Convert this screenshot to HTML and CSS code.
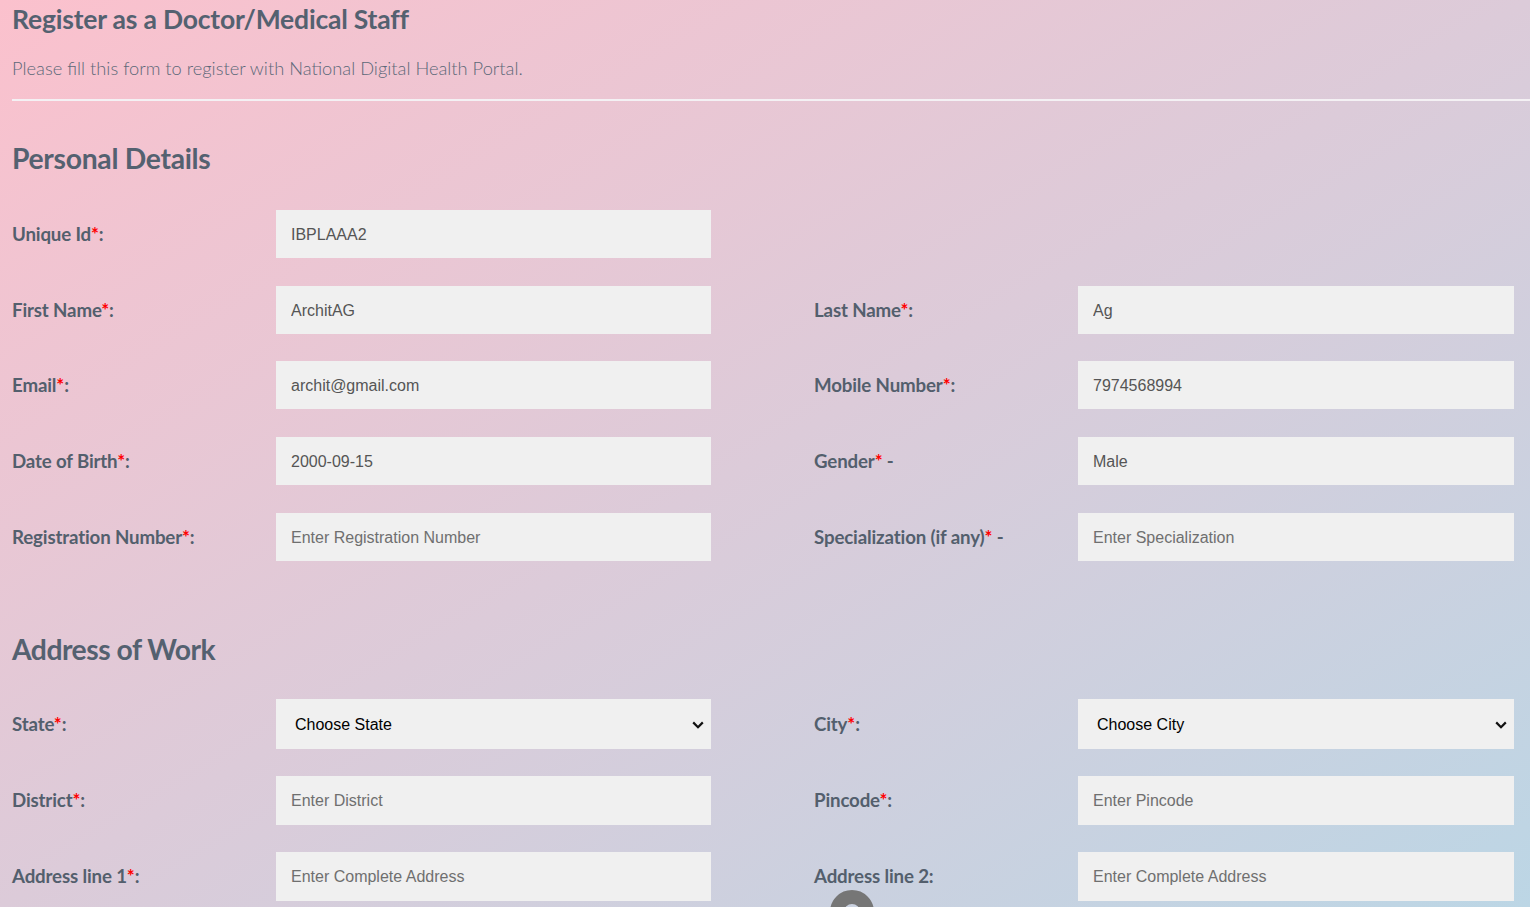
FILE: index.html
```html
<!DOCTYPE html>
<html>
<head>
<meta charset="utf-8">
<link rel="stylesheet" href="styles.css">
</head>
<body>
<div class="page">
  <header class="head">
    <h1 class="title">Register as a Doctor/Medical Staff</h1>
    <p class="subtitle">Please fill this form to register with National Digital Health Portal.</p>
  </header>
  <hr class="rule">

  <h2 class="section">Personal Details</h2>
  <div class="grid">
    <label class="lbl"><span>Unique Id<span class="req">*</span>:</span></label>
    <div class="field"><input class="inp" value="IBPLAAA2"></div>
    <div class="spacer"></div><div></div><div></div>

    <label class="lbl"><span>First Name<span class="req">*</span>:</span></label>
    <div class="field"><input class="inp" value="ArchitAG"></div>
    <div class="spacer"></div>
    <label class="lbl"><span>Last Name<span class="req">*</span>:</span></label>
    <div class="field"><input class="inp" value="Ag"></div>

    <label class="lbl"><span>Email<span class="req">*</span>:</span></label>
    <div class="field"><input class="inp" value="archit@gmail.com"></div>
    <div class="spacer"></div>
    <label class="lbl"><span>Mobile Number<span class="req">*</span>:</span></label>
    <div class="field"><input class="inp" value="7974568994"></div>

    <label class="lbl"><span>Date of Birth<span class="req">*</span>:</span></label>
    <div class="field"><input class="inp" value="2000-09-15"></div>
    <div class="spacer"></div>
    <label class="lbl"><span>Gender<span class="req">*</span> -</span></label>
    <div class="field"><input class="inp" value="Male"></div>

    <label class="lbl"><span>Registration Number<span class="req">*</span>:</span></label>
    <div class="field"><input class="inp" placeholder="Enter Registration Number"></div>
    <div class="spacer"></div>
    <label class="lbl"><span>Specialization (if any)<span class="req">*</span> -</span></label>
    <div class="field"><input class="inp" placeholder="Enter Specialization"></div>
  </div>

  <h2 class="section section-2">Address of Work</h2>
  <div class="grid grid-2">
    <label class="lbl"><span>State<span class="req">*</span>:</span></label>
    <div class="field">
      <div class="sel"><span>Choose State</span>
        <svg class="chev" width="12" height="8" viewBox="0 0 12 8"><path d="M1.2 1.4 6 6.2l4.8-4.8" fill="none" stroke="#111" stroke-width="2.2"/></svg>
      </div>
    </div>
    <div class="spacer"></div>
    <label class="lbl"><span>City<span class="req">*</span>:</span></label>
    <div class="field">
      <div class="sel"><span>Choose City</span>
        <svg class="chev" width="12" height="8" viewBox="0 0 12 8"><path d="M1.2 1.4 6 6.2l4.8-4.8" fill="none" stroke="#111" stroke-width="2.2"/></svg>
      </div>
    </div>

    <label class="lbl"><span>District<span class="req">*</span>:</span></label>
    <div class="field"><input class="inp" placeholder="Enter District"></div>
    <div class="spacer"></div>
    <label class="lbl"><span>Pincode<span class="req">*</span>:</span></label>
    <div class="field"><input class="inp" placeholder="Enter Pincode"></div>

    <label class="lbl"><span>Address line 1<span class="req">*</span>:</span></label>
    <div class="field"><input class="inp" placeholder="Enter Complete Address"></div>
    <div class="spacer"></div>
    <label class="lbl"><span>Address line 2:</span></label>
    <div class="field"><input class="inp" placeholder="Enter Complete Address"></div>
  </div>
</div>
<div class="ring"></div>
</body>
</html>
```

FILE: styles.css
```css
html, body {
  margin: 0;
  padding: 0;
  height: 100%;
  overflow: hidden;
}
body {
  background: linear-gradient(to bottom right, #fbc1cd 0%, #dccbd9 50%, #bcd6e5 100%);
  font-family: "Source Sans Pro", Lato, "Liberation Sans", sans-serif;
  color: #535f6d;
  position: relative;
}
.page {
  padding: 0 0 0 12px;
}
.head {
  padding-top: 1px;
}
.title {
  margin: 0;
  font-size: 26.5px;
  font-weight: 700;
  line-height: 36px;
  color: #546170;
  letter-spacing: -0.2px;
}
.subtitle {
  margin: 19px 0 0 0;
  font-size: 18.3px;
  font-weight: 300;
  line-height: 24px;
  color: #5c6878;
}
.rule {
  margin: 19px 0 0 0;
  border: 0;
  border-top: 2px solid #f4f1f4;
  height: 0;
}
.section {
  margin: 39px 0 0 0;
  font-size: 28.3px;
  font-weight: 700;
  line-height: 36px;
  color: #546170;
  letter-spacing: -0.3px;
}
.section-2 {
  margin-top: 70px;
  letter-spacing: -0.5px;
}
.grid {
  display: grid;
  grid-template-columns: 264px 435px 103px 264px 436px;
  grid-auto-rows: 48px;
  row-gap: 27.7px;
  margin-top: 34px;
}
.grid-2 {
  grid-auto-rows: 49px;
  row-gap: 27px;
  margin-top: 33px;
}
.grid-2 > :nth-child(-n+5) {
  margin-top: -1px;
  height: 50px;
}
.lbl {
  display: flex;
  align-items: center;
  font-size: 18.7px;
  font-weight: 700;
  color: #535f6d;
  letter-spacing: -0.15px;
  white-space: nowrap;
}
.req {
  color: #f00;
}
.field {
  display: flex;
}
.inp {
  width: 100%;
  box-sizing: border-box;
  border: 0;
  outline: none;
  background: #f0f0f0;
  padding: 2px 15px 0 15px;
  font-family: "Liberation Sans", Arial, sans-serif;
  font-size: 16px;
  color: #555;
  height: 48px;
}
.grid-2 .inp { height: 49px; }
.inp::placeholder {
  color: #6f6f6f;
  opacity: 1;
}
.sel {
  width: 100%;
  box-sizing: border-box;
  background: #f0f0f0;
  height: 50px;
  padding: 2px 7px 0 19px;
  display: flex;
  align-items: center;
  justify-content: space-between;
  font-family: "Liberation Sans", Arial, sans-serif;
  font-size: 16px;
  color: #000;
}
.ring {
  position: absolute;
  left: 830px;
  top: 890px;
  width: 44px;
  height: 44px;
  box-sizing: border-box;
  border-radius: 50%;
  border: 14px solid #767676;
}
```
